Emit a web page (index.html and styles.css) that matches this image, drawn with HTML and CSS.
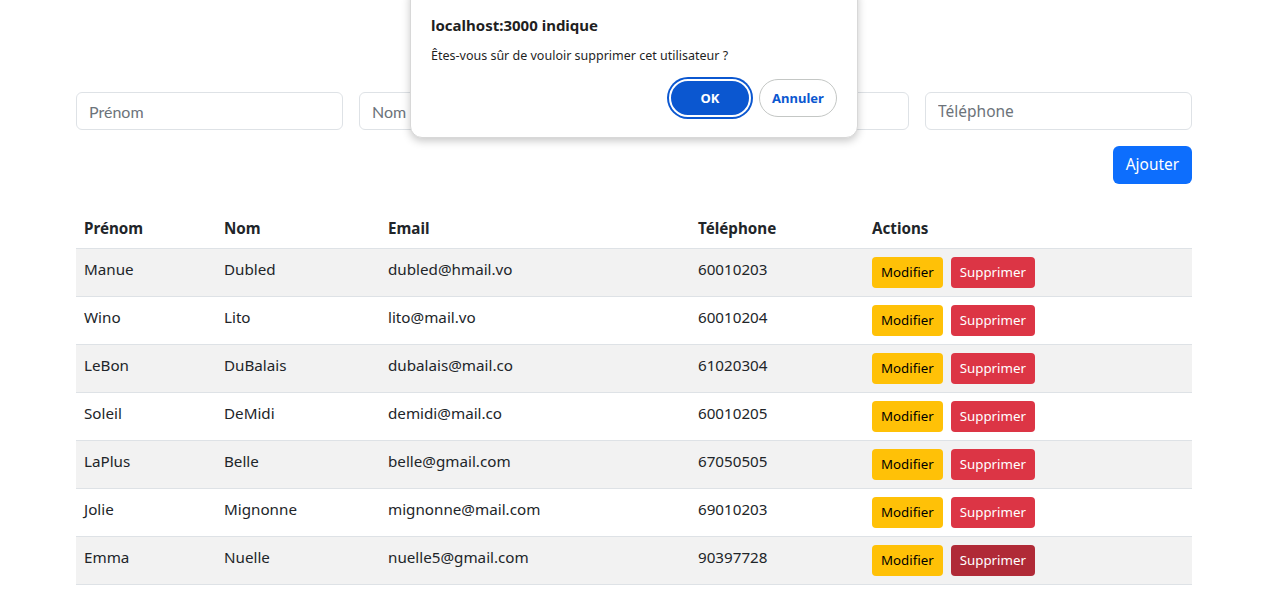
FILE: index.html
```html
<!DOCTYPE html>
<html lang="fr">
<head>
<meta charset="utf-8">
<title>Utilisateurs</title>
<link rel="stylesheet" href="styles.css">
</head>
<body>
<div class="container">
  <form class="form">
    <div class="inputs">
      <input class="field field-lato" placeholder="Prénom">
      <input class="field field-lato" placeholder="Nom">
      <input class="field" placeholder="Email">
      <input class="field" placeholder="Téléphone">
    </div>
    <div class="form-actions">
      <button type="button" class="btn btn-primary">Ajouter</button>
    </div>
  </form>

  <table class="table">
    <thead>
      <tr>
        <th class="c1">Prénom</th>
        <th class="c2">Nom</th>
        <th class="c3">Email</th>
        <th class="c4">Téléphone</th>
        <th>Actions</th>
      </tr>
    </thead>
    <tbody>
      <tr><td>Manue</td><td>Dubled</td><td>dubled@hmail.vo</td><td>60010203</td><td><button class="btn-sm btn-warning">Modifier</button><button class="btn-sm btn-danger">Supprimer</button></td></tr>
      <tr><td>Wino</td><td>Lito</td><td>lito@mail.vo</td><td>60010204</td><td><button class="btn-sm btn-warning">Modifier</button><button class="btn-sm btn-danger">Supprimer</button></td></tr>
      <tr><td>LeBon</td><td>DuBalais</td><td>dubalais@mail.co</td><td>61020304</td><td><button class="btn-sm btn-warning">Modifier</button><button class="btn-sm btn-danger">Supprimer</button></td></tr>
      <tr><td>Soleil</td><td>DeMidi</td><td>demidi@mail.co</td><td>60010205</td><td><button class="btn-sm btn-warning">Modifier</button><button class="btn-sm btn-danger">Supprimer</button></td></tr>
      <tr><td>LaPlus</td><td>Belle</td><td>belle@gmail.com</td><td>67050505</td><td><button class="btn-sm btn-warning">Modifier</button><button class="btn-sm btn-danger">Supprimer</button></td></tr>
      <tr><td>Jolie</td><td>Mignonne</td><td>mignonne@mail.com</td><td>69010203</td><td><button class="btn-sm btn-warning">Modifier</button><button class="btn-sm btn-danger">Supprimer</button></td></tr>
      <tr><td>Emma</td><td>Nuelle</td><td>nuelle5@gmail.com</td><td>90397728</td><td><button class="btn-sm btn-warning">Modifier</button><button class="btn-sm btn-danger is-active">Supprimer</button></td></tr>
    </tbody>
  </table>
</div>

<div class="dialog" role="dialog">
  <div class="dialog-title">localhost:3000 indique</div>
  <div class="dialog-msg">Êtes-vous sûr de vouloir supprimer cet utilisateur ?</div>
  <div class="dialog-buttons">
    <button class="dbtn dbtn-ok">OK</button>
    <button class="dbtn dbtn-cancel">Annuler</button>
  </div>
</div>
</body>
</html>
```

FILE: styles.css
```css
* { box-sizing: border-box; }
html, body { margin: 0; padding: 0; }
body {
  font-family: "Noto Sans", "Open Sans", sans-serif;
  font-size: 15.2px;
  line-height: 24px;
  color: #212529;
  background: #fff;
}
.container {
  width: 1116px;
  margin-left: 76px;
  padding-top: 92px;
}
.inputs {
  display: grid;
  grid-template-columns: repeat(4, 1fr);
  gap: 16px;
}
.field {
  height: 38px;
  padding: 6px 12px;
  font-family: "Noto Sans", sans-serif;
  font-size: 15.5px;
  border: 1px solid #dee2e6;
  border-radius: 6px;
  color: #212529;
  background: #fff;
  outline: none;
}
.field-lato { font-family: Lato, sans-serif; font-size: 16px; }
.field::placeholder { color: #6c737a; }
.form-actions {
  display: flex;
  justify-content: flex-end;
  margin-top: 16px;
}
.btn {
  font-family: "Noto Sans", sans-serif;
  font-size: 15.4px;
  line-height: 24px;
  padding: 6px 12px;
  border: 1px solid transparent;
  border-radius: 6px;
  cursor: pointer;
}
.btn-primary { background: #0d6efd; color: #fff; }

.table {
  width: 100%;
  border-collapse: collapse;
  margin-top: 24px;
}
.table th, .table td {
  text-align: left;
  vertical-align: top;
  padding: 8px;
  border-bottom: 1px solid #dee2e6;
}
.table th { font-weight: 700; }
.c1 { width: 140px; }
.c2 { width: 164px; }
.c3 { width: 310px; }
.c4 { width: 174px; }
.table tbody tr:nth-child(odd) td { background: #f2f2f2; }

.btn-sm {
  font-family: "Noto Sans", sans-serif;
  font-size: 13.3px;
  line-height: 21px;
  padding: 4px 8px;
  border: 1px solid transparent;
  border-radius: 4px;
  margin-right: 8px;
  cursor: pointer;
  vertical-align: top;
}
.btn-warning { background: #ffc107; color: #000; }
.btn-danger { background: #dc3545; color: #fff; }
.btn-danger.is-active { background: #b02a37; }

.dialog {
  position: absolute;
  left: 410px;
  top: -14px;
  width: 448px;
  padding: 26px 20px 20px 20px;
  background: #fff;
  border: 1px solid #d8d8d8;
  border-radius: 12px;
  box-shadow: 0 3px 8px rgba(0,0,0,0.22);
  font-family: "Noto Sans", sans-serif;
}
.dialog-title {
  font-size: 15px;
  font-weight: 700;
  color: #1f1f1f;
  line-height: 24px;
}
.dialog-msg {
  font-size: 12.5px;
  color: #1f1f1f;
  margin-top: 10px;
  line-height: 18px;
}
.dialog-buttons {
  display: flex;
  justify-content: flex-end;
  gap: 8px;
  margin-top: 14px;
}
.dbtn {
  height: 38px;
  border-radius: 19px;
  font-family: "Noto Sans", sans-serif;
  font-size: 13px;
  font-weight: 700;
  cursor: pointer;
}
.dbtn-ok {
  width: 82px;
  background: #0b57d0;
  color: #fff;
  border: 2px solid #fff;
  box-shadow: 0 0 0 2px #0b57d0;
}
.dbtn-cancel {
  width: 78px;
  background: #fff;
  color: #0b57d0;
  border: 1px solid #c4c7c5;
}
```
